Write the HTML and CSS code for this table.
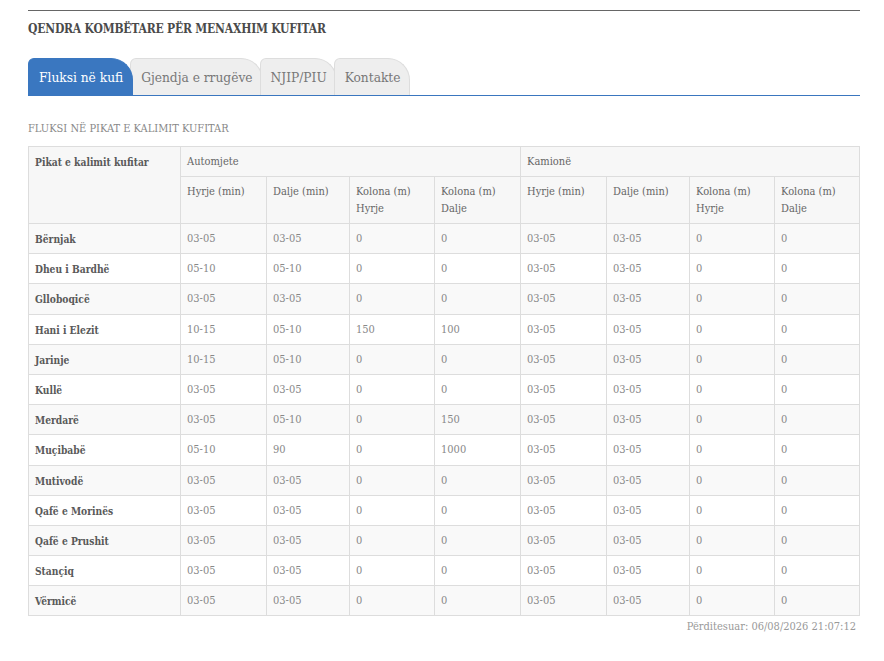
FILE: index.html
```html
<!DOCTYPE html>
<html lang="sq">
<head>
<meta charset="utf-8">
<title>Fluksi në kufi</title>
<link rel="stylesheet" href="styles.css">
</head>
<body>
<div class="wrap">
  <h1 class="title">QENDRA KOMBËTARE PËR MENAXHIM KUFITAR</h1>
  <ul class="tabs">
    <li class="tab active">Fluksi në kufi</li>
    <li class="tab">Gjendja e rrugëve</li>
    <li class="tab">NJIP/PIU</li>
    <li class="tab">Kontakte</li>
  </ul>
  <h2 class="subtitle">FLUKSI NË PIKAT E KALIMIT KUFITAR</h2>
  <table class="grid">
    <colgroup>
      <col style="width:152px"><col style="width:86px"><col style="width:83px"><col style="width:85px"><col style="width:86px"><col style="width:86px"><col style="width:83px"><col style="width:85px"><col style="width:85px">
    </colgroup>
    <thead>
      <tr class="h1"><th rowspan="2">Pikat e kalimit kufitar</th><th colspan="4">Automjete</th><th colspan="4">Kamionë</th></tr>
      <tr class="h2"><th>Hyrje (min)</th><th>Dalje (min)</th><th>Kolona (m)<br>Hyrje</th><th>Kolona (m)<br>Dalje</th><th>Hyrje (min)</th><th>Dalje (min)</th><th>Kolona (m)<br>Hyrje</th><th>Kolona (m)<br>Dalje</th></tr>
    </thead>
    <tbody>
      <tr><th>Bërnjak</th><td>03-05</td><td>03-05</td><td>0</td><td>0</td><td>03-05</td><td>03-05</td><td>0</td><td>0</td></tr>
      <tr><th>Dheu i Bardhë</th><td>05-10</td><td>05-10</td><td>0</td><td>0</td><td>03-05</td><td>03-05</td><td>0</td><td>0</td></tr>
      <tr><th>Glloboqicë</th><td>03-05</td><td>03-05</td><td>0</td><td>0</td><td>03-05</td><td>03-05</td><td>0</td><td>0</td></tr>
      <tr><th>Hani i Elezit</th><td>10-15</td><td>05-10</td><td>150</td><td>100</td><td>03-05</td><td>03-05</td><td>0</td><td>0</td></tr>
      <tr><th>Jarinje</th><td>10-15</td><td>05-10</td><td>0</td><td>0</td><td>03-05</td><td>03-05</td><td>0</td><td>0</td></tr>
      <tr><th>Kullë</th><td>03-05</td><td>03-05</td><td>0</td><td>0</td><td>03-05</td><td>03-05</td><td>0</td><td>0</td></tr>
      <tr><th>Merdarë</th><td>03-05</td><td>05-10</td><td>0</td><td>150</td><td>03-05</td><td>03-05</td><td>0</td><td>0</td></tr>
      <tr><th>Muçibabë</th><td>05-10</td><td>90</td><td>0</td><td>1000</td><td>03-05</td><td>03-05</td><td>0</td><td>0</td></tr>
      <tr><th>Mutivodë</th><td>03-05</td><td>03-05</td><td>0</td><td>0</td><td>03-05</td><td>03-05</td><td>0</td><td>0</td></tr>
      <tr><th>Qafë e Morinës</th><td>03-05</td><td>03-05</td><td>0</td><td>0</td><td>03-05</td><td>03-05</td><td>0</td><td>0</td></tr>
      <tr><th>Qafë e Prushit</th><td>03-05</td><td>03-05</td><td>0</td><td>0</td><td>03-05</td><td>03-05</td><td>0</td><td>0</td></tr>
      <tr><th>Stançiq</th><td>03-05</td><td>03-05</td><td>0</td><td>0</td><td>03-05</td><td>03-05</td><td>0</td><td>0</td></tr>
      <tr><th>Vërmicë</th><td>03-05</td><td>03-05</td><td>0</td><td>0</td><td>03-05</td><td>03-05</td><td>0</td><td>0</td></tr>
    </tbody>
  </table>
  <p class="updated">Përditesuar: 06/08/2026 21:07:12</p>
</div>
</body>
</html>
```
FILE: styles.css
```css
* { box-sizing: border-box; }
body {
  margin: 0;
  background: #fff;
  font-family: "DejaVu Serif Condensed", "DejaVu Serif", serif;
  color: #777;
}
.wrap {
  margin: 10px 24px 0 28px;
  border-top: 1px solid #666;
}
.title {
  margin: 10px 0 0;
  font-size: 12px;
  font-weight: bold;
  color: #4a4a4a;
  line-height: 16px;
  letter-spacing: -0.2px;
}
.tabs {
  list-style: none;
  margin: 21px 0 0;
  padding: 0;
  display: flex;
  border-bottom: 1px solid #3a76bf;
  height: 38px;
}
.tab {
  position: relative;
  height: 37px;
  padding: 0 9px 0 10px;
  margin-right: -3px;
  background: #eee;
  border: 1px solid #ddd;
  border-bottom: none;
  border-radius: 6px 22px 0 0;
  font-size: 13.6px;
  line-height: 36px;
  color: #777;
  white-space: nowrap;
}
.tab.active {
  background: #3a77c0;
  border-color: #3a77c0;
  color: #fff;
  z-index: 2;
  padding-left: 10px;
}
.subtitle {
  margin: 26px 0 0;
  font-size: 11px;
  font-weight: normal;
  color: #888;
  line-height: 14px;
}
.grid {
  margin-top: 10px;
  width: 832px;
  border-collapse: collapse;
  table-layout: fixed;
  font-size: 11px;
}
.grid th, .grid td {
  border: 1px solid #ddd;
  text-align: left;
  vertical-align: top;
  padding: 7px 6px 6px;
  line-height: 16px;
  height: 30px;
}
.grid thead th {
  background: #f7f7f7;
  color: #666;
  font-weight: normal;
}
.grid .h2 th { height: 46px; padding-top: 6px; line-height: 17px; }
.grid .h1 th:first-child,
.grid tbody th {
  font-weight: bold;
  font-size: 10.2px;
  color: #5a5a5a;
}
.grid tbody tr { height: 30.2px; }
.grid tbody td { color: #888; }
.grid tbody tr:nth-child(odd) { background: #f9f9f9; }
.updated {
  margin: 4px 4px 0 0;
  text-align: right;
  font-size: 11px;
  color: #999;
}
```
